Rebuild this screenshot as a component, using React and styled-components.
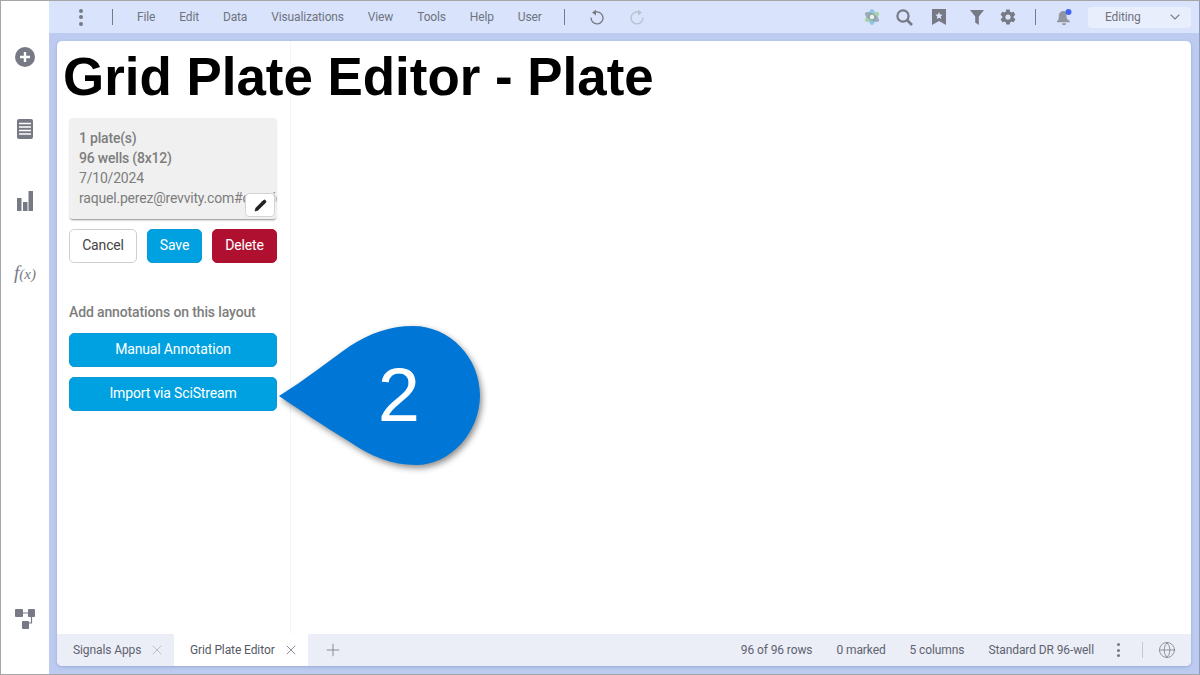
import React from "react";
import styled, { createGlobalStyle } from "styled-components";
import { Pencil, X, Plus, Globe } from "lucide-react";

const Global = createGlobalStyle`
  html, body { margin: 0; padding: 0; }
  body { font-family: Roboto, "Liberation Sans", sans-serif; background: #fff; }
`;

const Frame = styled.div`
  width: 1200px;
  height: 675px;
  box-sizing: border-box;
  border: 1px solid #a6a6a6;
  border-right-color: #8f9bb8;
  display: flex;
  overflow: hidden;
  position: relative;
`;

const Rail = styled.nav`
  width: 48px;
  flex: none;
  background: #fff;
  display: flex;
  flex-direction: column;
  align-items: center;
  color: #777a85;
  padding-top: 44px;
  box-sizing: border-box;
`;

const RailIcon = styled.div`
  width: 24px;
  height: 24px;
  display: flex;
  align-items: center;
  justify-content: center;
  margin-bottom: ${(p) => p.$gap || 0}px;
  margin-top: ${(p) => (p.$push ? "auto" : "0")};
`;

const Fx = styled.span`
  font-family: "Liberation Serif", serif;
  font-style: italic;
  font-size: 19px;
  color: #777a85;
  white-space: nowrap;
  small { font-size: 15px; }
`;

const Workspace = styled.div`
  flex: 1;
  min-width: 0;
  display: flex;
  flex-direction: column;
  background: #bccbef;
`;

const TopBar = styled.header`
  height: 32px;
  flex: none;
  background: #d9e3fb;
  display: flex;
  align-items: center;
  color: #6f7380;
  font-size: 12px;
  letter-spacing: -0.15px;
`;

const Kebab = styled.div`
  display: flex;
  flex-direction: column;
  gap: 2.5px;
  margin-right: ${(p) => p.$after || 0}px;
  span {
    width: ${(p) => p.$size || 4}px;
    height: ${(p) => p.$size || 4}px;
    border-radius: 50%;
    background: #777a85;
  }
`;

const Divider = styled.i`
  display: block;
  width: 1px;
  height: ${(p) => p.$h || 16}px;
  background: ${(p) => p.$color || "#777a85"};
  flex: none;
  margin-left: ${(p) => p.$before || 0}px;
`;

const Menu = styled.div`
  display: flex;
  align-items: center;
  gap: 24px;
  margin: 0 22px 0 24px;
`;

const ToolIcon = styled.svg`
  display: block;
  flex: none;
  margin-left: ${(p) => p.$before || 0}px;
  transform: ${(p) => (p.$flip ? "scaleX(-1)" : "none")};
`;

const LeftTools = styled.div`
  display: flex;
  align-items: center;
  padding-left: 30px;
`;

const UndoGroup = styled.div`
  display: flex;
  align-items: center;
  gap: 24px;
  margin-left: 24px;
`;

const RightTools = styled.div`
  margin-left: auto;
  display: flex;
  align-items: center;
  gap: 16px;
  padding-right: 8px;
`;

const ModeSelect = styled.div`
  width: 103px;
  height: 21px;
  box-sizing: border-box;
  border-radius: 4px;
  background: #e9eefc;
  display: flex;
  align-items: center;
  justify-content: space-between;
  padding: 0 11px 0 17px;
  font-size: 12px;
  color: #6f7380;
`;

const Panel = styled.main`
  flex: 1;
  min-height: 0;
  margin: 8px;
  border-radius: 5px;
  background: #fff;
  display: flex;
  flex-direction: column;
  overflow: hidden;
  box-shadow: 0 1px 3px rgba(70, 90, 150, 0.3);
`;

const Body = styled.div`
  flex: 1;
  min-height: 0;
  display: flex;
`;

const Sidebar = styled.aside`
  width: 234px;
  flex: none;
  box-sizing: border-box;
  border-right: 1px solid #f3f5fc;
  padding: 0 13px 0 12px;
  display: flex;
  flex-direction: column;
`;

const Title = styled.h1`
  margin: 6px 0 0 -6px;
  font-family: "Liberation Sans", Arial, sans-serif;
  font-weight: 700;
  font-size: 52.9px;
  line-height: 60px;
  color: #000;
  white-space: nowrap;
  position: relative;
  z-index: 1;
`;

const InfoCard = styled.section`
  margin-top: 11px;
  height: 101px;
  box-sizing: border-box;
  background: #f0f0f0;
  border-radius: 4px;
  padding: 10px 10px;
  box-shadow: 0 2px 2px -1px rgba(0, 0, 0, 0.45);
  color: #7d7d7d;
  font-size: 14px;
  letter-spacing: -0.2px;
  line-height: 20px;
  position: relative;
  overflow: hidden;
`;

const InfoLine = styled.div`
  font-weight: ${(p) => (p.$bold ? 500 : 400)};
  white-space: nowrap;
`;

const EditBadge = styled.button`
  position: absolute;
  right: 2px;
  bottom: 2px;
  width: 30px;
  height: 24px;
  padding: 0;
  border: 1px solid #d4d4d4;
  border-radius: 4px;
  background: #fff;
  display: flex;
  align-items: center;
  justify-content: center;
  color: #222;
`;

const ButtonRow = styled.div`
  display: flex;
  gap: 10px;
  margin-top: 10px;
`;

const Button = styled.button`
  height: 34px;
  box-sizing: border-box;
  width: ${(p) => (p.$w ? p.$w + "px" : "100%")};
  flex: none;
  border-radius: 5px;
  font-family: Roboto, sans-serif;
  font-size: 14px;
  letter-spacing: -0.15px;
  padding: 0 0 2px;
  color: ${(p) => (p.$kind === "plain" ? "#444" : "#fff")};
  background: ${(p) =>
    p.$kind === "plain" ? "#fff" : p.$kind === "danger" ? "#b01030" : "#00a1e0"};
  border: 1px solid
    ${(p) =>
      p.$kind === "plain" ? "#cfcfcf" : p.$kind === "danger" ? "#b01030" : "#0a99d4"};
`;

const SectionLabel = styled.div`
  margin-top: 41px;
  margin-bottom: 12px;
  font-size: 14px;
  letter-spacing: -0.13px;
  line-height: 17px;
  font-weight: 500;
  color: #7d7d7d;
`;

const ActionStack = styled.div`
  display: flex;
  flex-direction: column;
  gap: 10px;
`;

const Callout = styled.svg`
  position: absolute;
  left: 269px;
  top: 314px;
  filter: drop-shadow(2px 3px 3px rgba(0, 0, 0, 0.45));
`;

const CalloutNumber = styled.span`
  position: absolute;
  left: 368px;
  top: 354px;
  width: 60px;
  text-align: center;
  font-family: "Liberation Sans", Arial, sans-serif;
  font-size: 76px;
  line-height: 80px;
  color: #fff;
`;

const StatusBar = styled.footer`
  height: 32px;
  flex: none;
  background: #ebeef7;
  display: flex;
  align-items: stretch;
  font-size: 12px;
  letter-spacing: -0.1px;
  color: #5f6370;
`;

const Tab = styled.div`
  width: ${(p) => p.$w}px;
  box-sizing: border-box;
  display: flex;
  align-items: center;
  justify-content: space-between;
  padding: 0 9px 0 16px;
  background: ${(p) => (p.$active ? "#fff" : "transparent")};
  color: ${(p) => (p.$active ? "#565a66" : "#5f6370")};
`;

const AddTab = styled.div`
  width: 50px;
  display: flex;
  align-items: center;
  justify-content: center;
  color: #777a85;
`;

const StatusItems = styled.div`
  margin-left: auto;
  display: flex;
  align-items: center;
  gap: 24px;
  padding-right: 15px;
`;

const StatusEnd = styled.div`
  display: flex;
  align-items: center;
  gap: 15px;
  margin-left: -1px;
  color: #777a85;
`;

const menuItems = ["File", "Edit", "Data", "Visualizations", "View", "Tools", "Help", "User"];

const Dots = ({ size, after }) => (
  <Kebab $size={size} $after={after}>
    <span />
    <span />
    <span />
  </Kebab>
);

const UndoIcon = ({ flip, color }) => (
  <ToolIcon width="16" height="16" viewBox="0 0 16 16" $flip={flip}>
    <path d="M5.2 3.6 A6 6 0 1 1 2 8.6" fill="none" stroke={color} strokeWidth="1.4" />
    <path d="M3 3.6 L7 0.8 L7 6.4 Z" fill={color} />
  </ToolIcon>
);

export default function App() {
  return (
    <>
      <Global />
      <Frame>
        <Rail>
          <RailIcon $gap={48}>
            <ToolIcon width="20" height="20" viewBox="0 0 20 20">
              <circle cx="10" cy="10" r="10" fill="#777a85" />
              <path d="M10 5v10M5 10h10" stroke="#fff" strokeWidth="2.4" />
            </ToolIcon>
          </RailIcon>
          <RailIcon $gap={48}>
            <ToolIcon width="16" height="20" viewBox="0 0 16 20">
              <rect width="16" height="20" rx="2" fill="#777a85" />
              <path d="M2 4.5h12M2 8h12M2 11.5h12M2 15h12" stroke="#fff" strokeWidth="1.3" />
            </ToolIcon>
          </RailIcon>
          <RailIcon $gap={48}>
            <ToolIcon width="16" height="20" viewBox="0 0 16 20">
              <path d="M0 7h4.5v13H0zM6 11h4.5v9H6zM11.5 0H16v20h-4.500z" fill="#777a85" />
            </ToolIcon>
          </RailIcon>
          <RailIcon>
            <Fx>
              f<small>(x)</small>
            </Fx>
          </RailIcon>
          <RailIcon $push $gap={43}>
            <ToolIcon width="20" height="20" viewBox="0 0 20 20">
              <rect x="0" y="0" width="8" height="8" rx="1" fill="#777a85" />
              <rect x="13" y="0" width="7" height="8" rx="1" fill="#777a85" />
              <rect x="7" y="12" width="7" height="8" rx="1" fill="#777a85" />
              <path d="M8 4h5M16.5 8v6H14" stroke="#777a85" strokeWidth="1.2" fill="none" />
            </ToolIcon>
          </RailIcon>
        </Rail>

        <Workspace>
          <TopBar>
            <LeftTools>
              <Dots />
              <Divider $before={29} />
              <Menu>
                {menuItems.map((m) => (
                  <span key={m}>{m}</span>
                ))}
              </Menu>
              <Divider />
              <UndoGroup>
                <UndoIcon color="#777a85" />
                <UndoIcon flip color="#b9bfcc" />
              </UndoGroup>
            </LeftTools>
            <RightTools>
              <ToolIcon width="16" height="18" viewBox="0 0 16 18">
                <ellipse cx="8" cy="9" rx="3.5" ry="8" fill="#8fc6ea" />
                <ellipse cx="8" cy="9" rx="3.5" ry="8" fill="#9fcf9f" opacity="0.85" transform="rotate(60 8 9)" />
                <ellipse cx="8" cy="9" rx="3.5" ry="8" fill="#8f9aa5" opacity="0.75" transform="rotate(120 8 9)" />
                <circle cx="8" cy="9" r="2.2" fill="#eef4f4" />
              </ToolIcon>
              <ToolIcon width="17" height="17" viewBox="0 0 17 17">
                <circle cx="7" cy="7" r="5.6" fill="none" stroke="#777a85" strokeWidth="2.2" />
                <path d="M11 11l5 5" stroke="#777a85" strokeWidth="2.6" />
              </ToolIcon>
              <ToolIcon width="14" height="16" viewBox="0 0 14 16" $before={3}>
                <path d="M0 0h14v16L7 12 0 16z" fill="#777a85" />
                <path d="M7 3l1.1 2.4 2.5.3-1.9 1.7.5 2.5L7 8.7 4.8 9.9l.5-2.5-1.9-1.7 2.500-.3z" fill="#d9e3fb" />
              </ToolIcon>
              <ToolIcon width="14" height="15" viewBox="0 0 14 15" $before={8}>
                <path d="M0 0h14L8.8 6.6V15l-3.6-2.6V6.6z" fill="#777a85" />
              </ToolIcon>
              <ToolIcon width="18" height="18" viewBox="0 0 24 24" $before={-1}>
                <path
                  d="M19.4 13c.1-.3.1-.7.1-1s0-.7-.1-1l2.1-1.6c.2-.2.2-.4.1-.6l-2-3.5c-.1-.2-.4-.3-.6-.2l-2.5 1c-.5-.4-1.100-.7-1.700-1l-.4-2.600c0-.2-.2-.4-.5-.4h-4c-.3 0-.5.2-.5.4l-.4 2.600c-.6.3-1.200.6-1.700 1l-2.500-1c-.2-.1-.5 0-.6.2l-2 3.500c-.1.2-.1.4.1.6L4.500 11c-.1.3-.1.7-.1 1s0 .7.1 1l-2.100 1.600c-.2.2-.2.4-.1.6l2 3.500c.1.2.4.3.6.2l2.500-1c.5.4 1.100.7 1.700 1l.4 2.600c0 .2.2.4.5.4h4c.3 0 .5-.2.5-.4l.4-2.600c.6-.3 1.200-.6 1.700-1l2.500 1c.2.1.5 0 .6-.2l2-3.500c.1-.2.1-.4-.1-.6zM12 15.500a3.500 3.500 0 1 1 0-7 3.500 3.500 0 0 1 0 7z"
                  fill="#777a85"
                />
              </ToolIcon>
              <Divider $h={16} $before={2} />
              <ToolIcon width="16" height="18" viewBox="0 0 16 18" $before={4}>
                <path d="M1 13c1.500-1 1.800-2 1.800-5 0-3 2-5 5-5 1 0 2 .3 2.700.8V8c0 2.500.8 3.800 3.300 5v1.300H1z" fill="#9296a0" />
                <path d="M6 15.300h4a2 2 0 0 1-4 0z" fill="#9296a0" />
                <circle cx="12.500" cy="4" r="3" fill="#3f66f0" />
              </ToolIcon>
              <ModeSelect>
                Editing
                <ToolIcon width="10" height="6" viewBox="0 0 10 6">
                  <path d="M.6.6 5 5l4.400-4.400" fill="none" stroke="#777a85" strokeWidth="1.200" />
                </ToolIcon>
              </ModeSelect>
            </RightTools>
          </TopBar>

          <Panel>
            <Body>
              <Sidebar>
                <Title>Grid Plate Editor - Plate</Title>
                <InfoCard>
                  <InfoLine $bold>1 plate(s)</InfoLine>
                  <InfoLine $bold>96 wells (8x12)</InfoLine>
                  <InfoLine>7/10/2024</InfoLine>
                  <InfoLine>raquel.perez@revvity.com#openid</InfoLine>
                  <EditBadge>
                    <Pencil size={13} fill="#222" strokeWidth={1.5} />
                  </EditBadge>
                </InfoCard>
                <ButtonRow>
                  <Button $kind="plain" $w={68}>Cancel</Button>
                  <Button $w={55}>Save</Button>
                  <Button $kind="danger" $w={65}>Delete</Button>
                </ButtonRow>
                <SectionLabel>Add annotations on this layout</SectionLabel>
                <ActionStack>
                  <Button>Manual Annotation</Button>
                  <Button>Import via SciStream</Button>
                </ActionStack>
              </Sidebar>
            </Body>
            <StatusBar>
              <Tab $w={117}>
                Signals Apps
                <X size={16} color="#b0b3bd" strokeWidth={1.2} />
              </Tab>
              <Tab $active $w={134}>
                Grid Plate Editor
                <X size={16} color="#6f7380" strokeWidth={1.2} />
              </Tab>
              <AddTab>
                <Plus size={20} strokeWidth={1} />
              </AddTab>
              <StatusItems>
                <span>96 of 96 rows</span>
                <span>0 marked</span>
                <span>5 columns</span>
                <span>Standard DR 96-well</span>
                <StatusEnd>
                  <Dots size={3} after={7} />
                  <Divider $h={16} $color="#c5c9d6" />
                  <Globe size={18} strokeWidth={1} />
                </StatusEnd>
              </StatusItems>
            </StatusBar>
          </Panel>
        </Workspace>

        <Callout width="220" height="160" viewBox="0 0 220 160">
          <path
            d="M9 81 C35 65 60 45 80 31 C100 18 120 11 143 11 C180 11 210 43 210 80 C210 118 180 150 146 150 C122 150 100 141 80 127 C55 112 30 95 9 81 Z"
            fill="#0077d6"
          />
        </Callout>
        <CalloutNumber>2</CalloutNumber>
      </Frame>
    </>
  );
}
